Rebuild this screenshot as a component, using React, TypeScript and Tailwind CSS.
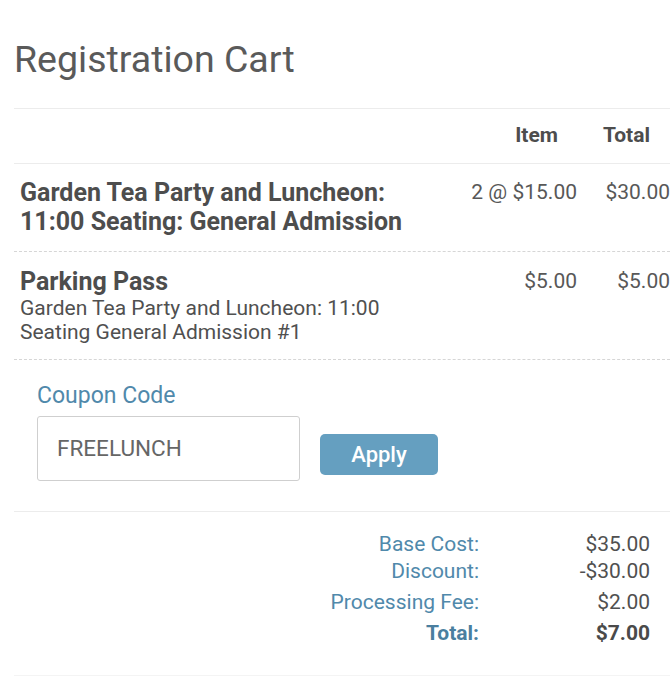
import React from "react";

export default function App() {
  return (
    <div
      className="w-[670px] h-[676px] overflow-hidden bg-white text-[#4a4a4a]"
      style={{ fontFamily: "Roboto, 'Liberation Sans', sans-serif" }}
    >
      <h1 className="pl-[14px] pt-[36px] text-[37.5px] leading-[46px] font-normal text-[#5a5a5a]">
        Registration Cart
      </h1>

      <div className="ml-[14px] mt-[26px]">
        {/* header */}
        <div className="flex h-[56px] items-center border-t border-b border-[#ececec] text-[21px] font-bold text-[#4d4d4d]">
          <div className="flex-1" />
          <div className="w-[130px] text-right pr-[19px]">Item</div>
          <div className="w-[93px] text-right pr-[20px]">Total</div>
        </div>

        {/* row 1 */}
        <div className="flex pt-[14px] pb-[15px] border-b border-dashed border-[#d6d6d6]">
          <div className="flex-1 pl-[6px] text-[25px] leading-[29px] font-bold text-[#4d4d4d]">
            Garden Tea Party and Luncheon:
            <br />
            11:00 Seating: General Admission
          </div>
          <div className="w-[130px] text-right text-[21px] leading-[29px] text-[#585858]">2 @ $15.00</div>
          <div className="w-[93px] text-right text-[21px] leading-[29px] text-[#585858]">$30.00</div>
        </div>

        {/* row 2 */}
        <div className="flex pt-[15px] pb-[15px] border-b border-dashed border-[#d6d6d6]">
          <div className="flex-1 pl-[6px]">
            <div className="text-[25px] leading-[29px] font-bold text-[#4d4d4d]">Parking Pass</div>
            <div className="text-[21px] leading-[24px] text-[#505050]">
              Garden Tea Party and Luncheon: 11:00
              <br />
              Seating General Admission #1
            </div>
          </div>
          <div className="w-[130px] text-right text-[21px] leading-[29px] text-[#585858]">$5.00</div>
          <div className="w-[93px] text-right text-[21px] leading-[29px] text-[#585858]">$5.00</div>
        </div>

        {/* coupon */}
        <div className="pl-[23px] pt-[21px] pb-[30px] border-b border-[#ececec]">
          <div className="text-[23px] leading-[29px] text-[#5089ab]">Coupon Code</div>
          <div className="flex items-end gap-[20px] mt-[6px]">
            <div className="w-[263px] h-[65px] border border-[#cfcfcf] rounded-[3px] flex items-center pl-[19px] text-[22.5px] text-[#666]">
              FREELUNCH
            </div>
            <button className="w-[118px] h-[41px] mb-[6px] rounded-[5px] bg-[#659fc0] text-white text-[22px] font-medium">
              Apply
            </button>
          </div>
        </div>

        {/* summary */}
        <div className="pt-[19px] pb-[26px] pr-[20px] border-b border-[#f4f4f4] text-[21px]">
          <div className="grid grid-cols-[1fr_171px] leading-[27px]">
            <div className="text-right text-[#5089ab]">Base Cost:</div>
            <div className="text-right text-[#505050]">$35.00</div>
            <div className="text-right text-[#5089ab]">Discount:</div>
            <div className="text-right text-[#505050]">-$30.00</div>
          </div>
          <div className="grid grid-cols-[1fr_171px] leading-[31px] mt-[2px]">
            <div className="text-right text-[#5089ab]">Processing Fee:</div>
            <div className="text-right text-[#505050]">$2.00</div>
            <div className="text-right font-bold text-[#4a7f9f]">Total:</div>
            <div className="text-right font-bold text-[#4a4a4a]">$7.00</div>
          </div>
        </div>
      </div>
    </div>
  );
}
